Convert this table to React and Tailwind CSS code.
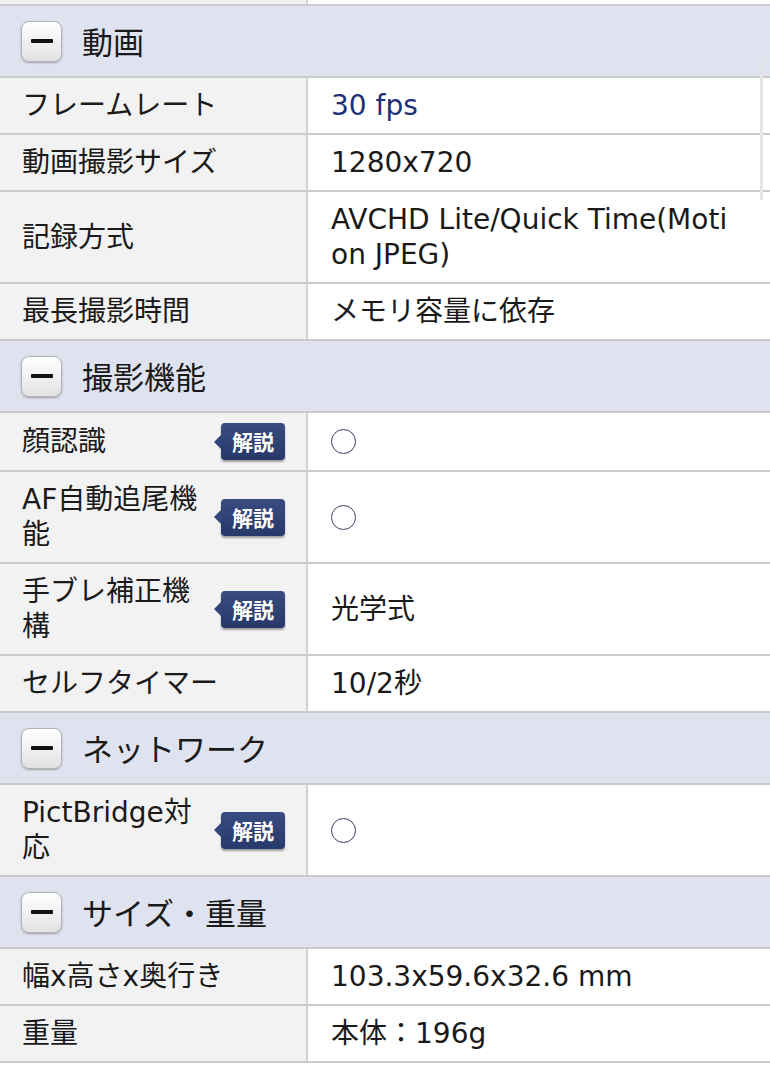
const font = { fontFamily: '"DejaVu Sans", "Noto Sans CJK JP", sans-serif' };
const cjk = { fontFamily: '"Noto Sans CJK JP", sans-serif' };

function Badge() {
  return (
    <div className="relative ml-auto flex h-[37px] w-[64px] shrink-0 items-center justify-center rounded-[4px] bg-gradient-to-b from-[#3a4d80] to-[#27386a] shadow-[0_2px_2px_rgba(0,0,0,0.35)]">
      <span className="absolute left-[-7px] top-1/2 h-0 w-0 -translate-y-1/2 border-y-[7px] border-r-[7px] border-y-transparent border-r-[#32457a]" />
      <span className="text-[21px] font-bold leading-none text-white" style={cjk}>解説</span>
    </div>
  );
}

function Circle() {
  return <span className="inline-block h-[25px] w-[25px] rounded-full border-[1.5px] border-[#3b4563]" />;
}

function Row({ label, value, badge, blue }) {
  return (
    <div className="grid grid-cols-[308px_1fr] border-b-2 border-[#cbcbcb]">
      <div className="flex items-center border-r-2 border-[#d2d2d2] bg-[#f2f2f2] py-[10px] pl-[22px] pr-[21px]">
        <div className={`${badge ? "w-[186px]" : "flex-1"} break-all leading-[35px] text-[#1a1a1a]`}>{label}</div>
        {badge && <Badge />}
      </div>
      <div className={`flex items-center bg-white py-[10px] pl-[23px] pr-[30px] leading-[35px] break-all ${blue ? "text-[#1f2f78]" : "text-[#1a1a1a]"}`}>
        {value}
      </div>
    </div>
  );
}

function Header({ title }) {
  return (
    <div className="flex h-[72px] items-center border-b-2 border-[#cbcbcb] bg-[#dfe3ef] pl-[21px]">
      <div className="flex h-[41px] w-[41px] items-center justify-center rounded-[8px] border border-[#b3b3b3] bg-gradient-to-b from-white to-[#e2e2e2] shadow-[0_1px_2px_rgba(0,0,0,0.3)]">
        <span className="h-[4px] w-[22px] rounded-[1px] bg-[#111]" />
      </div>
      <span className="ml-[20px] text-[31px] text-[#1a1a1a]" style={cjk}>{title}</span>
    </div>
  );
}

export default function App() {
  return (
    <div className="relative min-h-[1080px] w-[770px] bg-white text-[28px]" style={font}>
      <div className="grid h-[6px] grid-cols-[308px_1fr] border-b-2 border-[#cbcbcb]">
        <div className="border-r-2 border-[#d2d2d2] bg-[#f2f2f2]" />
        <div className="bg-white" />
      </div>

      <Header title="動画" />
      <Row label="フレームレート" value="30 fps" blue />
      <Row label="動画撮影サイズ" value="1280x720" />
      <Row label="記録方式" value="AVCHD Lite/Quick Time(Motion JPEG)" />
      <Row label="最長撮影時間" value="メモリ容量に依存" />

      <Header title="撮影機能" />
      <Row label="顔認識" value={<Circle />} badge />
      <Row label="AF自動追尾機能" value={<Circle />} badge />
      <Row label="手ブレ補正機構" value="光学式" badge />
      <Row label="セルフタイマー" value="10/2秒" />

      <Header title="ネットワーク" />
      <Row label="PictBridge対応" value={<Circle />} badge />

      <Header title="サイズ・重量" />
      <Row label="幅x高さx奥行き" value="103.3x59.6x32.6 mm" />
      <Row label="重量" value="本体：196g" />

      {/* scroll indicator */}
      <div className="absolute right-[7px] top-[58px] h-[142px] w-[3px] rounded-full bg-[#e4e4e8]" />
    </div>
  );
}
